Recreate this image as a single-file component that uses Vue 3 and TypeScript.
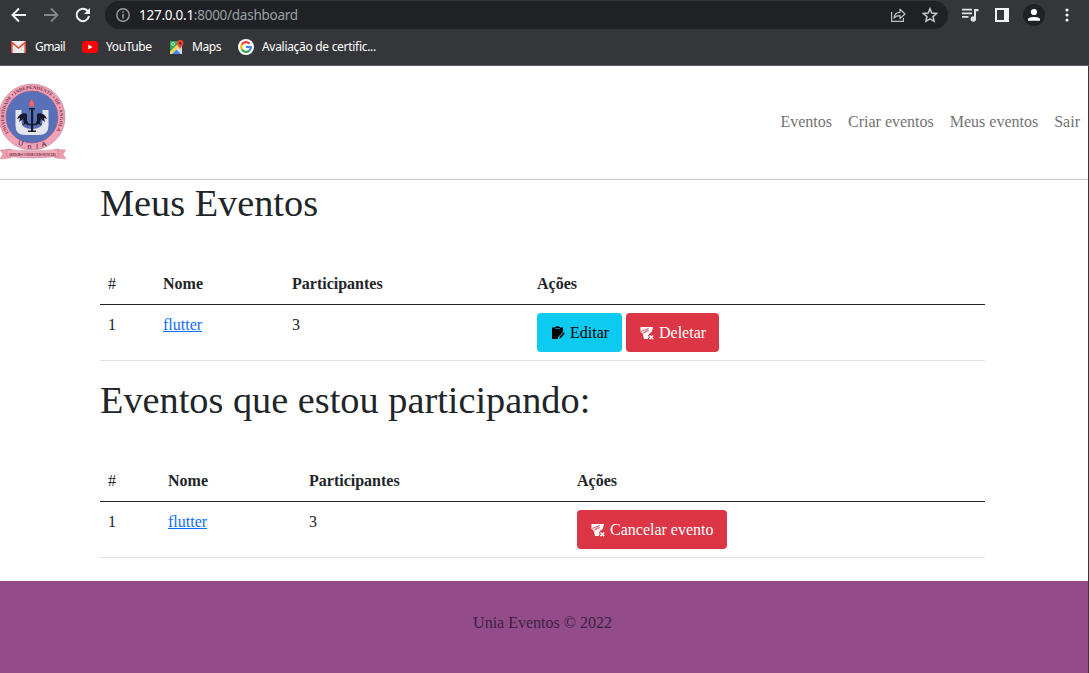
<script setup lang="ts">
interface Action { label: string; kind: 'edit' | 'delete' }
interface Section { title: string; cls: string; actions: Action[] }

const links: string[] = ['Eventos', 'Criar eventos', 'Meus eventos', 'Sair']
const sections: Section[] = [
  { title: 'Meus Eventos', cls: 'own', actions: [{ label: 'Editar', kind: 'edit' }, { label: 'Deletar', kind: 'delete' }] },
  { title: 'Eventos que estou participando:', cls: 'joined', actions: [{ label: 'Cancelar evento', kind: 'delete' }] },
]
</script>

<template>
  <div class="window">
    <header class="chrome">
      <div class="toolbar">
        <svg class="back" width="16" height="16" viewBox="0 0 16 16" fill="none" stroke="#f1f3f4" stroke-width="2"><path d="M15 8H2M8 1.500 1.500 8 8 14.500" /></svg>
        <svg class="forward" width="16" height="16" viewBox="0 0 16 16" fill="none" stroke="#85878a" stroke-width="1.800"><path d="M1 8h13M8 1.500 14.500 8 8 14.500" /></svg>
        <svg class="reload" width="16" height="16" viewBox="0 0 16 16"><path d="M13 4.400A6.200 6.200 0 1 0 14 9" fill="none" stroke="#f1f3f4" stroke-width="2" /><path d="M15 1v6H9z" fill="#f1f3f4" /></svg>
        <div class="address">
          <svg class="info" width="14" height="14" viewBox="0 0 14 14"><circle cx="7" cy="7" r="6.200" fill="none" stroke="#9aa0a6" stroke-width="1.400" /><path d="M7 6v4.500M7 3.300v1.500" stroke="#9aa0a6" stroke-width="1.500" /></svg>
          <span class="url"><b>127.0.0.1</b>:8000/dashboard</span>
          <svg class="share" width="16" height="16" viewBox="0 0 16 16" fill="none" stroke="#bdc1c6" stroke-width="1.200"><path d="M1.600 5v9.400h11.800V11" /><path d="M4 11c.5-4 2.500-5.700 6-5.700V2.200L15 7l-5 4.500V8.700C7.500 8.700 5.500 9.500 4 11z" stroke-linejoin="round" /></svg>
          <svg class="star" width="16" height="16" viewBox="0 0 16 16" fill="none" stroke="#c5c8cc" stroke-width="1.500"><path d="m8 1.700 1.800 4.400 4.800.4-3.600 3.100 1.100 4.700L8 11.800l-4.100 2.500L5 9.600 1.400 6.500l4.800-.4z" /></svg>
        </div>
        <svg class="media" width="17" height="14" viewBox="0 0 17 14"><path d="M0 1.700h10M0 5.300h10M0 8.900h6.500" stroke="#dee1e6" stroke-width="1.700" /><path d="M12 1h4.500v2.200H14V11a2.700 2.700 0 1 1-2-2.600z" fill="#dee1e6" /></svg>
        <svg class="panel" width="14" height="14" viewBox="0 0 14 14"><path fill="#f4f5f6" fill-rule="evenodd" d="M0 0h14v14H0zM2 2v10h7V2z" /></svg>
        <svg class="profile" width="22" height="22" viewBox="0 0 22 22"><circle cx="11" cy="11" r="11" fill="#202124" /><circle cx="11" cy="8" r="3.100" fill="#fff" /><path d="M5 16.800v-1.500c0-3 12-3 12 0v1.500z" fill="#fff" /></svg>
        <svg class="dots" width="4" height="14" viewBox="0 0 4 14" fill="#f1f3f4"><circle cx="2" cy="2" r="1.600" /><circle cx="2" cy="7" r="1.600" /><circle cx="2" cy="12" r="1.600" /></svg>
      </div>
      <nav class="bookmarks">
        <a class="gmail"><svg width="15" height="12" viewBox="0 0 15 12"><path d="M0 0h15v12H0z" fill="#eee" /><path d="m1 11.500 5-5M14 11.500l-5-5" stroke="#c7c7c7" stroke-width=".7" /><path d="M.8 12V1.300L7.500 7l6.700-5.700V12" fill="none" stroke="#dc4a3e" stroke-width="1.600" /></svg>Gmail</a>
        <a class="youtube"><svg width="16" height="12" viewBox="0 0 16 12"><rect width="16" height="12" rx="3" fill="#f00" /><path d="M6.300 3.500v5l4.300-2.500z" fill="#fff" /></svg>YouTube</a>
        <a class="maps"><svg width="15" height="15" viewBox="0 0 15 15"><path d="M1 1h12v13H1z" fill="#e8eaed" /><path d="M1 1h11L1 12z" fill="#34a853" /><path d="m1 12 8-8 2 2-8 8H1z" fill="#fbd64b" /><path d="M3 14 7.500 9.500 12 14z" fill="#4285f4" /><path d="m8 9 5 5V7l-3-1z" fill="#dadce0" /><circle cx="4" cy="4" r="1.500" fill="none" stroke="#dcefe0" stroke-width=".8" /><path d="M11 10C11 7 8 6 8 3.300a3.200 3.200 0 0 1 6.400 0C14.400 6 11 7 11 10z" fill="#ea4335" /><circle cx="11.200" cy="3.300" r="1.200" fill="#811411" /></svg>Maps</a>
        <a class="google"><svg width="16" height="16" viewBox="0 0 16 16"><circle cx="8" cy="8" r="8" fill="#fff" /><g fill="none" stroke-width="2.200"><path d="M11.600 4.700A4.900 4.900 0 0 0 3.700 5.700" stroke="#ea4335" /><path d="M3.700 5.700a4.900 4.900 0 0 0 0 4.600" stroke="#fbbc05" /><path d="M3.700 10.300A4.900 4.900 0 0 0 11.300 11.600" stroke="#34a853" /><path d="M11.300 11.600A4.900 4.900 0 0 0 12.900 8H8" stroke="#4285f4" /></g></svg>Avaliação de certific...</a>
      </nav>
    </header>

    <div class="page">
      <header class="site-header">
        <svg class="crest" width="67" height="79" viewBox="0 0 67 79">
          <defs><path id="ring-text" d="M8.800 49.700A28 28 0 1 1 55.200 49.700" /></defs>
          <circle cx="32" cy="34" r="33" fill="#f5a1b5" stroke="#b08090" stroke-width=".6" />
          <circle cx="32" cy="34" r="26" fill="#5870b8" stroke="#8e5d86" stroke-width=".7" />
          <text class="ring"><textPath href="#ring-text" textLength="118">UNIVERSIDADE • INDEPENDENTE • DE • ANGOLA</textPath></text>
          <path d="M15.500 27h6v12q0 7 10.500 7t10.500-7V27h6v16q0 9-10 9H25.500q-10 0-10-9z" fill="#e5e5ef" />
          <path d="M31 26h2.200v22H31zM28 47.500h8v1.400h-8zM29 25h6v1.400h-6z" fill="#171c30" />
          <path d="M26 32v4q0 6 6 6t6-6v-4" fill="none" stroke="#161a2c" stroke-width="1.600" />
          <path d="M27 31c-4-2-8 0-10 5l3-1-1 4 4-3 1 4-2 2 4-1 2 2-1-5zM37 31c4-2 8 0 10 5l-3-1 1 4-4-3-1 4 2 2-4-1-2 2 1-5z" fill="#161a2c" />
          <path d="M30 23.500c-2-3 0-4 2-8 0 3 4 5 1.500 8z" fill="#ed6662" />
          <text x="18" y="62" class="uniA" transform="rotate(8 18 62)">U</text><text x="27.500" y="65.500" class="uniA">n</text><text x="36" y="65.500" class="uniA">I</text><text x="42" y="64" class="uniA" transform="rotate(-12 42 64)">A</text>
          <path d="m0 67 11-1v9L0 76l3-5zM66 67l-11-1v9l11 1-3-5z" fill="#ed9bad" stroke="#c98a9b" stroke-width=".4" />
          <path d="M7 66.500q25 3 51 0v7q-26 3-51 0z" fill="#f3a8b9" stroke="#b97c8c" stroke-width=".5" />
          <text x="9" y="72.500" class="motto" textLength="47">SERVIR•CONHECER•VENCER</text>
        </svg>
        <nav class="site-nav"><a v-for="link in links" :key="link">{{ link }}</a></nav>
      </header>

      <main>
        <section v-for="section in sections" :key="section.title">
          <h1>{{ section.title }}</h1>
          <div class="table" :class="section.cls" role="table">
            <div class="row head" role="row"><span class="number">#</span><span>Nome</span><span>Participantes</span><span>Ações</span></div>
            <div class="row body" role="row">
              <span>1</span><span><a class="event-link">flutter</a></span><span>3</span>
              <span class="actions">
                <button v-for="action in section.actions" :key="action.label" :class="action.kind">
                  <svg v-if="action.kind === 'edit'" width="14" height="14" viewBox="0 0 14 14"><path d="M1 1.500h3V.8h1.200L6.500 0l1.300.8H9v.7h3V6l-5 5v2H1z" fill="#000" /><path d="M4 2.400h5" stroke="#0dcaf0" stroke-width=".7" /><path d="m8 13 .5-2.500L12.500 6 14 7.500 10 12z" fill="#000" stroke="#0dcaf0" stroke-width=".5" /></svg>
                  <svg v-else width="14" height="14" viewBox="0 0 14 14"><path d="M.5 1H13l-1 4.500L9 8l1 5H4L2.700 7.500.5 6z" fill="#fff" /><path d="m1 5.500 7.500-3L3.500 7 9 4.500" fill="none" stroke="#dc3545" stroke-width=".8" /><path d="m8.700 8.700 4.800 4.800m0-4.800-4.800 4.800" stroke="#dc3545" stroke-width="3" /><path d="m9.500 9.500 3.600 3.600m0-3.600-3.600 3.600" stroke="#fff" stroke-width="1.500" /></svg>
                  <span>{{ action.label }}</span>
                </button>
              </span>
            </div>
          </div>
        </section>
      </main>
      <footer>Unia Eventos © 2022</footer>
    </div>
  </div>
</template>

<style>
body { margin: 0; overflow: hidden; }
</style>
<style scoped>
* { box-sizing: border-box; }
.window { width: 1089px; height: 673px; background: #35363a; overflow: hidden; }
.chrome { height: 66px; border-bottom: 1px solid #5c5d60; background: #35363a; }
.toolbar { height: 30px; display: flex; align-items: center; padding-left: 11px; }
.toolbar svg { flex: none; }
.forward { margin-left: 16px; }
.reload { margin-left: 16px; }
.address { width: 843px; height: 28px; border-radius: 14px; background: #202124; margin-left: 14px; margin-top: -1px; display: flex; align-items: center; padding: 1px 10px 0 11px; }
.url { margin-left: 9px; font: 13.5px/20px "Noto Sans", sans-serif; color: #9aa0a6; white-space: nowrap; letter-spacing: -.26px; }
.url b { font-weight: 400; color: #fff; }
.share { margin-left: auto; }
.star { margin-left: 16px; }
.media { margin-left: 14px; }
.panel { margin-left: 16px; }
.profile { margin-left: 14px; }
.dots { margin-left: 20px; }
.bookmarks { height: 34px; display: flex; align-items: center; padding-left: 11px; color: #fff; font: 12px/18px "Noto Sans", sans-serif; }
.bookmarks a { display: flex; align-items: center; flex: none; white-space: nowrap; }
.gmail { width: 71px; gap: 9px; letter-spacing: -.55px; }
.youtube { width: 87px; gap: 8px; letter-spacing: -.4px; }
.maps { width: 69px; gap: 8px; letter-spacing: -.45px; }
.google { gap: 8px; letter-spacing: -.3px; }
.page { width: 1088px; height: 607px; background: #fff; color: #212529; font: 16px/24px "Liberation Serif", "Times New Roman", serif; }
.site-header { height: 114px; border-bottom: 1px solid #c5c5c5; display: flex; justify-content: space-between; align-items: center; }
.crest { margin-top: 0; overflow: visible; }
.ring { font: bold 4.800px "Liberation Serif", serif; fill: #68394c; }
.uniA { font: 7px "Liberation Sans", sans-serif; fill: #28213c; }
.motto { font: bold 4px "Liberation Serif", serif; fill: #7e3c50; }
.site-nav { display: flex; gap: 16px; padding-right: 8px; color: #737373; margin-top: -1px; }
main { width: 885px; margin-left: 100px; height: 401px; }
section { height: 197px; }
h1 { margin: 0; height: 77px; font-size: 38.3px; line-height: 46px; font-weight: 400; }
.row { display: grid; align-items: start; }
.own .row { grid-template-columns: 55px 129px 245px 1fr; }
.joined .row { grid-template-columns: 60px 141px 268px 1fr; }
.row > span { padding: 8px; }
.head { height: 48px; border-bottom: 1px solid #212529; font-weight: 700; padding-top: 7px; }
.head .number { font-weight: 400; }
.body { height: 56px; border-bottom: 1px solid #dee2e6; }
.event-link { color: #0d6efd; text-decoration: underline; }
.row > .actions { display: flex; gap: 4px; padding: 8px; }
button { height: 39px; padding: 0 0 0 14px; border: 0; border-radius: 4px; display: flex; align-items: center; gap: 5px; font: 16px/24px "Liberation Serif", serif; white-space: nowrap; }
.edit { width: 85px; color: #000; background: #0dcaf0; }
.delete { padding-right: 13px; color: #fff; background: #dc3545; }
footer { height: 92px; display: flex; align-items: center; justify-content: center; padding-right: 3px; padding-bottom: 8px; background: #934c89; color: #3c2044; }
</style>
